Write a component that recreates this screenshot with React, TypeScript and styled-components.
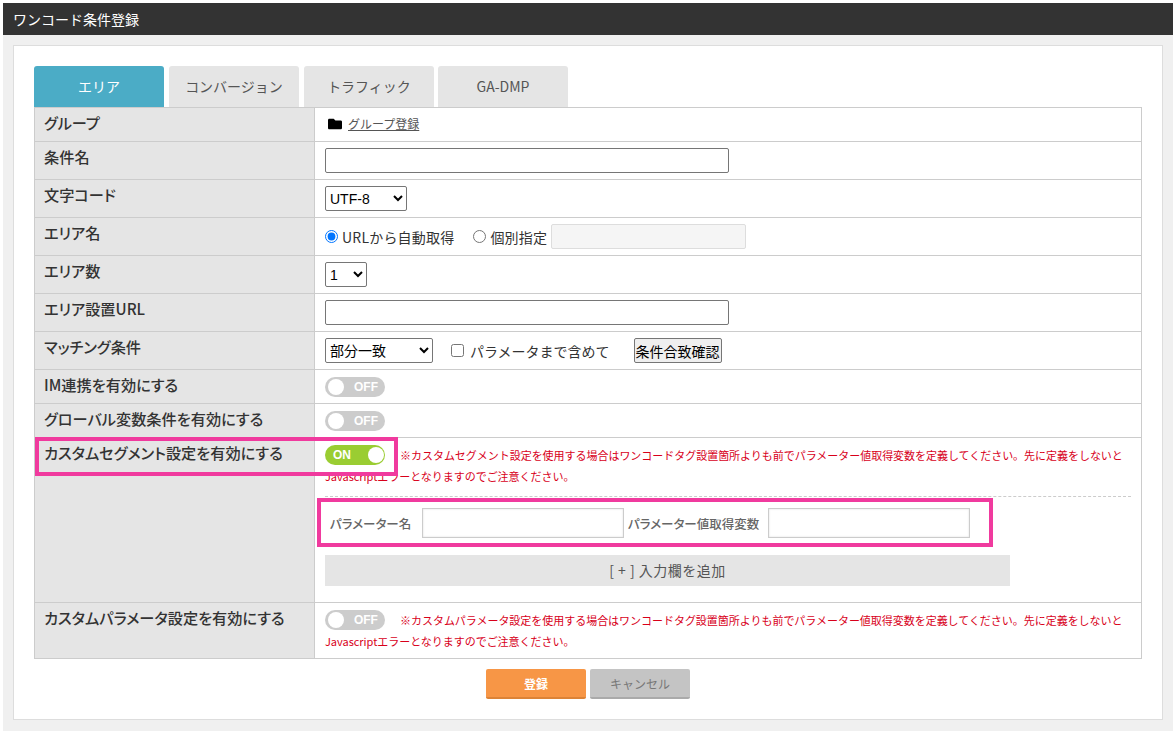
import React from "react";
import styled, { createGlobalStyle } from "styled-components";
import { FaFolder } from "react-icons/fa";

const FONT = `"Noto Sans CJK JP", "Noto Sans", "Liberation Sans", sans-serif`;

const GlobalStyle = createGlobalStyle`
  html, body {
    margin: 0;
    background: #fff;
    font-family: ${FONT};
    font-size: 14px;
    color: #333;
  }
  * { box-sizing: border-box; }
`;

const Page = styled.div`
  width: 1170px;
  height: 728px;
  margin: 3px;
  background: #f0f0f0;
  display: flex;
  flex-direction: column;
`;

const TitleBar = styled.h1`
  margin: 0;
  height: 32px;
  padding-left: 10px;
  background: #333;
  color: #fff;
  font-size: 14px;
  font-weight: 400;
  line-height: 32px;
`;

const Panel = styled.div`
  position: relative;
  margin: 10px 10px 0;
  height: 675px;
  padding: 20px 20px 0;
  background: #fff;
  border: 1px solid #ddd;
`;

const Tabs = styled.div`
  display: flex;
  gap: 5px;
  height: 41px;
`;

const Tab = styled.div<{ $active?: boolean }>`
  width: 130px;
  border-radius: 3px 3px 0 0;
  background: ${({ $active }) => ($active ? "#4bacc6" : "#e5e5e5")};
  color: ${({ $active }) => ($active ? "#fff" : "#555")};
  font-size: 14px;
  line-height: 41px;
  text-align: center;
  &:last-child {
    margin-left: -1px;
  }
`;

const FormTable = styled.div`
  border: 1px solid #ccc;
`;

const Row = styled.div<{ $height: number }>`
  display: grid;
  grid-template-columns: 280px 1fr;
  height: ${({ $height }) => $height}px;
  & + & {
    border-top: 1px solid #ccc;
  }
`;

const Label = styled.div`
  padding: 3px 0 0 9px;
  background: #e5e5e5;
  border-right: 1px solid #ccc;
  color: #333;
  font-size: 15.2px;
  font-weight: 500;
  line-height: 22px;
  font-feature-settings: "palt";
`;

const Value = styled.div`
  display: flex;
  align-items: center;
  padding: 0 10px;
  font-size: 14px;
`;

const TopValue = styled.div`
  padding: 7px 10px 0;
`;

const GroupLink = styled.a`
  margin: -2px 0 0 3px;
  display: flex;
  align-items: center;
  gap: 6px;
  color: #555;
  font-size: 12px;
  text-decoration: underline;
  svg {
    color: #000;
    font-size: 14px;
  }
`;

const TextInput = styled.input`
  width: 404px;
  height: 25px;
  padding: 1px 2px;
  background: #fff;
  border: 1px solid #767676;
  border-radius: 2px;
`;

const DisabledInput = styled(TextInput)`
  width: 195px;
  margin-left: 4px;
  background: #f5f5f5;
  border-color: #ddd;
`;

const Select = styled.select<{ $width: number }>`
  width: ${({ $width }) => $width}px;
  height: 25px;
  background: #fff;
  border: 1px solid #767676;
  border-radius: 2px;
  color: #000;
  font-family: "Liberation Sans", "Noto Sans CJK JP", sans-serif;
  font-size: 14px;
`;

const Choice = styled.label`
  display: flex;
  align-items: center;
  color: #333;
  font-size: 14px;
  letter-spacing: 0.2px;
  input {
    margin: 0 4px 0 0;
  }
`;

const ChoiceGap = styled(Choice)`
  margin-left: 19px;
`;

const CheckChoice = styled(Choice)`
  margin-left: 18px;
  letter-spacing: 0;
  input {
    margin: 0 6px 0 0;
  }
`;

const CheckButton = styled.button`
  width: 88px;
  height: 25px;
  margin-left: 24px;
  padding: 0;
  background: #efefef;
  border: 1px solid #767676;
  border-radius: 2px;
  color: #000;
  font-family: ${FONT};
  font-size: 14px;
  white-space: nowrap;
`;

const Toggle = styled.span<{ $on?: boolean }>`
  position: relative;
  display: inline-block;
  flex: none;
  width: 60px;
  height: 20px;
  border-radius: 10px;
  background: ${({ $on }) => ($on ? "#9acd32" : "#ccc")};
  color: #fff;
  font-family: "Liberation Sans", sans-serif;
  font-size: 12px;
  font-weight: 700;
  line-height: 20px;
  vertical-align: top;
  padding-left: ${({ $on }) => ($on ? "8px" : "29px")};
  &::after {
    content: "";
    position: absolute;
    top: 2px;
    left: ${({ $on }) => ($on ? "43px" : "3px")};
    width: 16px;
    height: 16px;
    border-radius: 50%;
    background: #fff;
  }
`;

const Note = styled.div`
  color: #d8001a;
  font-size: 11px;
  letter-spacing: -0.03px;
  line-height: 20.5px;
  span.text {
    margin-left: 15px;
  }
`;

const ParamBlock = styled.div`
  margin-top: 10px;
  padding-top: 11px;
  width: 806px;
  border-top: 1px dashed #ccc;
`;

const ParamRow = styled.div`
  display: flex;
  align-items: center;
  padding-left: 5px;
  height: 30px;
`;

const ParamLabel = styled.span<{ $width: number }>`
  width: ${({ $width }) => $width}px;
  color: #666;
  font-size: 12.5px;
  font-weight: 500;
  font-feature-settings: "palt";
  white-space: nowrap;
`;

const ParamInput = styled.input`
  width: 202px;
  height: 30px;
  margin: 0 4px 0 9px;
  background: #fff;
  border: 1px solid #ccc;
  box-shadow: inset 0 0 2px rgba(0, 0, 0, 0.15);
`;

const AddButton = styled.div`
  width: 685px;
  height: 31px;
  margin-top: 17px;
  background: #e5e5e5;
  color: #555;
  font-size: 14px;
  letter-spacing: 0.5px;
  line-height: 31px;
  text-align: center;
`;

const Actions = styled.div`
  display: flex;
  justify-content: center;
  gap: 4px;
  margin-top: 10px;
`;

const ActionButton = styled.button<{ $primary?: boolean }>`
  width: 100px;
  height: 30px;
  padding: 0;
  border: 0;
  border-bottom: 2px solid ${({ $primary }) => ($primary ? "#dc8337" : "#aaa")};
  border-radius: 2px;
  background: ${({ $primary }) => ($primary ? "#f79646" : "#c4c4c4")};
  color: ${({ $primary }) => ($primary ? "#fff" : "#777")};
  font-family: ${FONT};
  font-size: 12px;
  font-weight: ${({ $primary }) => ($primary ? 700 : 400)};
`;

const Highlight = styled.div<{ $left: number; $top: number; $width: number; $height: number }>`
  position: absolute;
  left: ${({ $left }) => $left}px;
  top: ${({ $top }) => $top}px;
  width: ${({ $width }) => $width}px;
  height: ${({ $height }) => $height}px;
  border: 4px solid #f03a9e;
  pointer-events: none;
`;

const SEGMENT_NOTE_1 =
  "※カスタムセグメント設定を使用する場合はワンコードタグ設置箇所よりも前でパラメーター値取得変数を定義してください。先に定義をしないと";
const PARAM_NOTE_1 =
  "※カスタムパラメータ設定を使用する場合はワンコードタグ設置箇所よりも前でパラメーター値取得変数を定義してください。先に定義をしないと";
const NOTE_2 = "Javascriptエラーとなりますのでご注意ください。";

export default function App() {
  return (
    <>
      <GlobalStyle />
      <Page>
        <TitleBar>ワンコード条件登録</TitleBar>
        <Panel>
          <Tabs>
            <Tab $active>エリア</Tab>
            <Tab>コンバージョン</Tab>
            <Tab>トラフィック</Tab>
            <Tab>GA-DMP</Tab>
          </Tabs>
          <FormTable>
            <Row $height={33}>
              <Label>グループ</Label>
              <Value>
                <GroupLink>
                  <FaFolder />
                  グループ登録
                </GroupLink>
              </Value>
            </Row>
            <Row $height={38}>
              <Label>条件名</Label>
              <Value>
                <TextInput />
              </Value>
            </Row>
            <Row $height={38}>
              <Label>文字コード</Label>
              <Value>
                <Select $width={82}>
                  <option>UTF-8</option>
                </Select>
              </Value>
            </Row>
            <Row $height={38}>
              <Label>エリア名</Label>
              <Value>
                <Choice>
                  <input type="radio" name="area" defaultChecked />
                  URLから自動取得
                </Choice>
                <ChoiceGap>
                  <input type="radio" name="area" />
                  個別指定
                </ChoiceGap>
                <DisabledInput disabled />
              </Value>
            </Row>
            <Row $height={38}>
              <Label>エリア数</Label>
              <Value>
                <Select $width={42}>
                  <option>1</option>
                </Select>
              </Value>
            </Row>
            <Row $height={38}>
              <Label>エリア設置URL</Label>
              <Value>
                <TextInput />
              </Value>
            </Row>
            <Row $height={38}>
              <Label>マッチング条件</Label>
              <Value>
                <Select $width={108}>
                  <option>部分一致</option>
                </Select>
                <CheckChoice>
                  <input type="checkbox" />
                  パラメータまで含めて
                </CheckChoice>
                <CheckButton>条件合致確認</CheckButton>
              </Value>
            </Row>
            <Row $height={34}>
              <Label>IM連携を有効にする</Label>
              <Value>
                <Toggle>OFF</Toggle>
              </Value>
            </Row>
            <Row $height={34}>
              <Label>グローバル変数条件を有効にする</Label>
              <Value>
                <Toggle>OFF</Toggle>
              </Value>
            </Row>
            <Row $height={165}>
              <Label>カスタムセグメント設定を有効にする</Label>
              <TopValue>
                <Note>
                  <Toggle $on>ON</Toggle>
                  <span className="text">{SEGMENT_NOTE_1}</span>
                  <br />
                  {NOTE_2}
                </Note>
                <ParamBlock>
                  <ParamRow>
                    <ParamLabel $width={83}>パラメーター名</ParamLabel>
                    <ParamInput />
                    <ParamLabel $width={131}>パラメーター値取得変数</ParamLabel>
                    <ParamInput />
                  </ParamRow>
                </ParamBlock>
                <AddButton>[ + ] 入力欄を追加</AddButton>
              </TopValue>
            </Row>
            <Row $height={56}>
              <Label>カスタムパラメータ設定を有効にする</Label>
              <TopValue>
                <Note>
                  <Toggle>OFF</Toggle>
                  <span className="text">{PARAM_NOTE_1}</span>
                  <br />
                  {NOTE_2}
                </Note>
              </TopValue>
            </Row>
          </FormTable>
          <Actions>
            <ActionButton $primary>登録</ActionButton>
            <ActionButton>キャンセル</ActionButton>
          </Actions>
          <Highlight $left={21} $top={391} $width={363} $height={39} />
          <Highlight $left={303} $top={452} $width={676} $height={49} />
        </Panel>
      </Page>
    </>
  );
}
